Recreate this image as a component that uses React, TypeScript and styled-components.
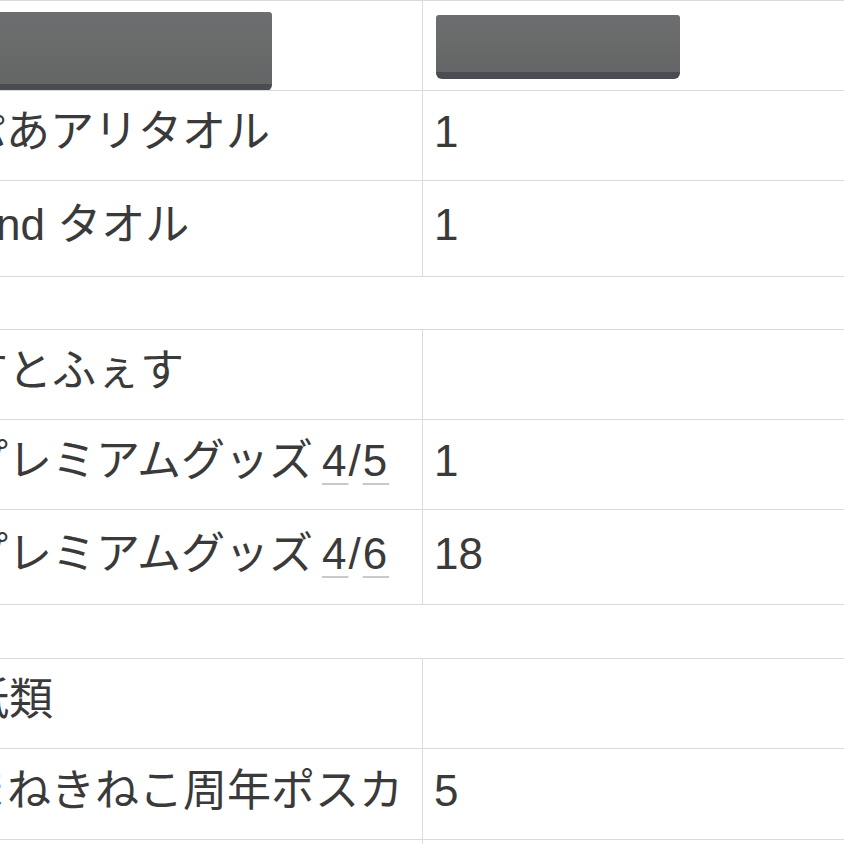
import React from "react";
import styled, { createGlobalStyle } from "styled-components";

const Global = createGlobalStyle`
  html, body { margin: 0; padding: 0; background: #ffffff; }
  body {
    font-family: "Liberation Sans", "Noto Sans CJK JP", sans-serif;
    color: #3a3a3a;
  }
`;

const Page = styled.div`
  width: 844px;
  height: 844px;
  overflow: hidden;
  background: #ffffff;
  display: flex;
  flex-direction: column;
`;

const Section = styled.div<{ $gap: number }>`
  margin-top: ${(p) => p.$gap}px;
  border-top: 1px solid #dadada;
  display: flex;
  flex-direction: column;
  flex-shrink: 0;
`;

const Row = styled.div<{ $h: number }>`
  display: grid;
  grid-template-columns: 423px 1fr;
  height: ${(p) => p.$h}px;
  border-bottom: 1px solid #dadada;
  box-sizing: border-box;
  flex-shrink: 0;
`;

const NameCell = styled.div<{ $header?: boolean }>`
  border-right: 1px solid #dadada;
  overflow: hidden;
  display: flex;
  align-items: ${(p) => (p.$header ? "flex-start" : "center")};
  padding-bottom: ${(p) => (p.$header ? 0 : 6)}px;
  box-sizing: border-box;
`;

const QtyCell = styled.div<{ $header?: boolean }>`
  display: flex;
  align-items: ${(p) => (p.$header ? "flex-start" : "center")};
  padding-left: ${(p) => (p.$header ? 0 : 11)}px;
  padding-bottom: ${(p) => (p.$header ? 0 : 6)}px;
  box-sizing: border-box;
  overflow: hidden;
`;

const Label = styled.span<{ $shift: number }>`
  margin-left: ${(p) => p.$shift}px;
  font-size: 44px;
  line-height: 1.2;
  white-space: nowrap;
  flex-shrink: 0;
`;

const Qty = styled.span`
  font-size: 44px;
  line-height: 1.2;
  white-space: nowrap;
`;

const DateRef = styled.span`
  margin-left: 9px;
  letter-spacing: 2px;
`;

const Digit = styled.span`
  text-decoration: underline;
  text-decoration-color: #c9c9c9;
  text-decoration-thickness: 2px;
  text-underline-offset: 7px;
`;

const Redact = styled.div<{ $w: number; $h: number; $top: number; $left: number }>`
  flex-shrink: 0;
  width: ${(p) => p.$w}px;
  height: ${(p) => p.$h}px;
  margin-top: ${(p) => p.$top}px;
  margin-left: ${(p) => p.$left}px;
  box-sizing: border-box;
  background: linear-gradient(180deg, #6d6e6f 0%, #686969 60%, #646566 100%);
  border-bottom: 7px solid #4b4b52;
  border-radius: 3px 3px 6px 6px;
`;

type Item = {
  name: React.ReactNode;
  shift: number;
  qty?: string;
  h?: number;
};

const dated = (d: string, n: string) => (
  <>
    プレミアムグッズ
    <DateRef>
      <Digit>{d}</Digit>/<Digit>{n}</Digit>
    </DateRef>
  </>
);

const sections: { gap: number; header?: boolean; rows: Item[] }[] = [
  {
    gap: 0,
    header: true,
    rows: [
      { name: "ぷあアリタオル", shift: -38, qty: "1" },
      { name: "nd タオル", shift: -4, qty: "1", h: 96 },
    ],
  },
  {
    gap: 52,
    rows: [
      { name: "すとふぇす", shift: -36 },
      { name: dated("4", "5"), shift: -36, qty: "1" },
      { name: dated("4", "6"), shift: -36, qty: "18", h: 95 },
    ],
  },
  {
    gap: 53,
    rows: [
      { name: "紙類", shift: -35 },
      { name: "まねきねこ周年ポスカ", shift: -37, qty: "5", h: 91 },
      { name: "", shift: 0 },
    ],
  },
];

export default function App() {
  return (
    <>
      <Global />
      <Page>
        {sections.map((s, si) => (
          <Section key={si} $gap={s.gap}>
            {s.header && (
              <Row $h={90}>
                <NameCell $header>
                  <Redact $w={292} $h={79} $top={11} $left={-20} />
                </NameCell>
                <QtyCell $header>
                  <Redact $w={244} $h={64} $top={14} $left={13} />
                </QtyCell>
              </Row>
            )}
            {s.rows.map((r, ri) => (
              <Row key={ri} $h={r.h ?? 90}>
                <NameCell>
                  <Label $shift={r.shift}>{r.name}</Label>
                </NameCell>
                <QtyCell>{r.qty && <Qty>{r.qty}</Qty>}</QtyCell>
              </Row>
            ))}
          </Section>
        ))}
      </Page>
    </>
  );
}
